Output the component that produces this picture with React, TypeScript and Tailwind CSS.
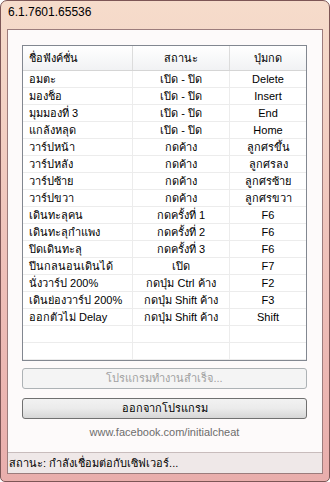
import React from 'react';

const rows = [
  ['อมตะ', 'เปิด - ปิด', 'Delete'],
  ['มองช็อ', 'เปิด - ปิด', 'Insert'],
  ['มุมมองที่ 3', 'เปิด - ปิด', 'End'],
  ['แกล้งหลุด', 'เปิด - ปิด', 'Home'],
  ['วาร์ปหน้า', 'กดค้าง', 'ลูกศรขึ้น'],
  ['วาร์ปหลัง', 'กดค้าง', 'ลูกศรลง'],
  ['วาร์ปซ้าย', 'กดค้าง', 'ลูกศรซ้าย'],
  ['วาร์ปขวา', 'กดค้าง', 'ลูกศรขวา'],
  ['เดินทะลุคน', 'กดครั้งที่ 1', 'F6'],
  ['เดินทะลุกำแพง', 'กดครั้งที่ 2', 'F6'],
  ['ปิดเดินทะลุ', 'กดครั้งที่ 3', 'F6'],
  ['ปีนกลนอนเดินได้', 'เปิด', 'F7'],
  ['นั่งวาร์ป 200%', 'กดปุ่ม Ctrl ค้าง', 'F2'],
  ['เดินย่องวาร์ป 200%', 'กดปุ่ม Shift ค้าง', 'F3'],
  ['ออกตัวไม่ Delay', 'กดปุ่ม Shift ค้าง', 'Shift'],
];

const App = () => {
  return (
    <div
      className="w-[330px] h-[482px] flex flex-col rounded-t-[7px] rounded-b-[5px] border border-[#7d5656] bg-gradient-to-b from-[#f6dccb] via-[#efc3bb] to-[#e9aeac] text-black"
      style={{ fontFamily: 'Tahoma, "Liberation Sans", "Noto Sans", sans-serif' }}
    >
      {/* Title bar */}
      <div className="h-[28px] pt-[2px] pl-[7px] text-[12px]">6.1.7601.65536</div>

      {/* Client area */}
      <div className="flex-1 mx-[6px] mb-[7px] flex flex-col border border-[#9c7c7c] bg-[#fdfafa]">
        <div className="flex-1 flex flex-col pt-[15px] pl-[14px] pr-[15px]">
          {/* List view */}
          <div className="h-[316px] border border-[#828790] bg-white text-[11px] overflow-hidden">
            <div className="flex h-[25px] border-b border-[#d5d5d5] bg-gradient-to-b from-white to-[#f1f2f4]">
              <div className="w-[110px] flex items-center pl-[6px] border-r border-[#dcdcdc]">ชื่อฟังค์ชั่น</div>
              <div className="w-[97px] flex items-center justify-center border-r border-[#dcdcdc]">สถานะ</div>
              <div className="flex-1 flex items-center justify-center">ปุ่มกด</div>
            </div>
            {rows.map((r, i) => (
              <div key={i} className="flex h-[17px] border-b border-[#ececec]">
                <div className="w-[110px] flex items-center pl-[6px] border-r border-[#ececec] whitespace-nowrap">{r[0]}</div>
                <div className="w-[97px] flex items-center justify-center border-r border-[#ececec] whitespace-nowrap">{r[1]}</div>
                <div className="flex-1 flex items-center justify-center whitespace-nowrap">{r[2]}</div>
              </div>
            ))}
            {[0, 1].map((i) => (
              <div key={'e' + i} className="flex h-[17px] border-b border-[#ececec]">
                <div className="w-[110px] border-r border-[#ececec]"></div>
                <div className="w-[97px] border-r border-[#ececec]"></div>
                <div className="flex-1"></div>
              </div>
            ))}
          </div>

          {/* Buttons */}
          <button
            disabled
            className="mt-[7px] h-[21px] rounded-[3px] border border-[#adb2b5] bg-[#f4f4f4] text-[11px] text-[#a0a0a0]"
          >
            โปรแกรมทำงานสำเร็จ...
          </button>
          <button className="mt-[9px] h-[21px] rounded-[3px] border border-[#707070] bg-gradient-to-b from-[#f2f2f2] via-[#ebebeb] to-[#d6d6d6] text-[11px]">
            ออกจากโปรแกรม
          </button>
          <div className="mt-[5px] text-center text-[11px] text-[#6d6d6d]">www.facebook.com/initialcheat</div>
        </div>

        {/* Status bar */}
        <div className="h-[21px] flex items-center pl-[1px] border-t border-[#c8bcbc] bg-[#efe8e8] text-[11px]">
          สถานะ: กำลังเชื่อมต่อกับเซิฟเวอร์...
        </div>
      </div>
    </div>
  );
};

export default App;
